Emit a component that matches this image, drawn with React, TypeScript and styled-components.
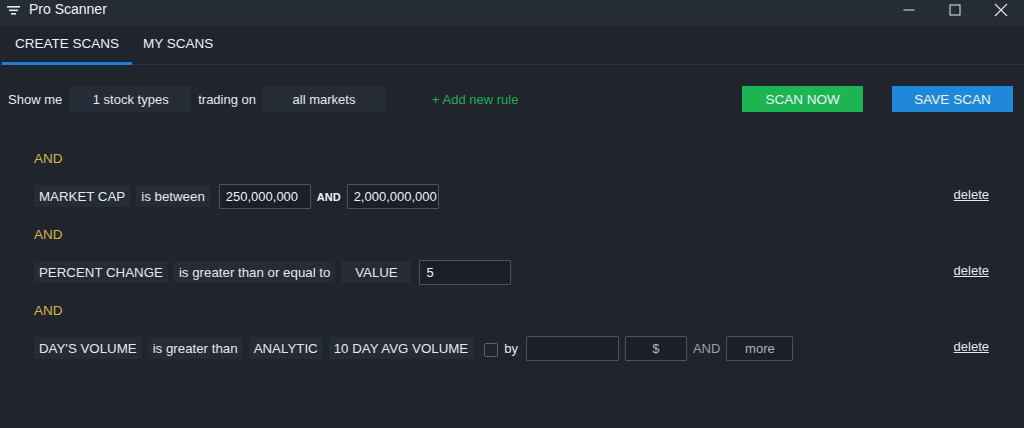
import * as React from 'react'
import styled, { createGlobalStyle } from 'styled-components'

// ______________________________________________________
//
// @ Global

const GlobalStyle = createGlobalStyle`
  html, body {
    margin: 0;
    padding: 0;
    background: #1f242d;
  }
  body {
    font-family: 'Liberation Sans', Arial, sans-serif;
    color: #e6e8ec;
  }
`

// ______________________________________________________
//
// @ Frame

const Window = styled.div`
  width: 1024px;
  height: 428px;
  background: #1f242d;
  display: flex;
  flex-direction: column;
  overflow: hidden;
`

const TitleBar = styled.div`
  height: 25px;
  background: #262c36;
  display: flex;
  align-items: center;
  padding-left: 7px;
`

const Title = styled.span`
  font-size: 14px;
  color: #eef0f3;
  margin-left: 9px;
  margin-top: -7px;
`

const WinControls = styled.div`
  margin-left: auto;
  display: flex;
  align-items: center;
  height: 100%;
`

const WinBtn = styled.div`
  width: 46px;
  height: 100%;
  display: flex;
  align-items: center;
  justify-content: center;
  margin-top: -6px;
`

const Tabs = styled.div`
  display: flex;
  height: 39px;
  border-bottom: 1px solid #2c323c;
  padding-left: 2px;
`

const Tab = styled.div<{ $active?: boolean }>`
  display: flex;
  align-items: center;
  padding: 0 ${p => (p.$active ? '13px' : '11px')};
  font-size: 13.5px;
  color: #eef0f3;
  border-bottom: 3px solid ${p => (p.$active ? '#1f7fd8' : 'transparent')};
  margin-bottom: -1px;
  min-width: ${p => (p.$active ? '102px' : 'auto')};
`

// ______________________________________________________
//
// @ Toolbar

const Toolbar = styled.div`
  display: flex;
  align-items: center;
  height: 26px;
  margin-top: 21px;
  padding: 0 11px 0 8px;
`

const Label = styled.span<{ $ml?: number; $mr?: number }>`
  font-size: 13px;
  color: #e6e8ec;
  margin-left: ${p => p.$ml ?? 0}px;
  margin-right: ${p => p.$mr ?? 0}px;
  white-space: nowrap;
`

const Select = styled.div<{ $w: number }>`
  width: ${p => p.$w}px;
  height: 26px;
  background: #262c36;
  display: flex;
  align-items: center;
  justify-content: center;
  font-size: 13px;
  color: #e6e8ec;
`

const AddRule = styled.span`
  color: #1fae56;
  font-size: 13px;
  margin-left: 47px;
  white-space: nowrap;
`

const Actions = styled.div`
  margin-left: auto;
  display: flex;
  gap: 29px;
`

const ActionBtn = styled.div<{ $bg: string }>`
  width: 121px;
  height: 26px;
  background: ${p => p.$bg};
  display: flex;
  align-items: center;
  justify-content: center;
  color: #eef4f8;
  font-size: 13.5px;
`

// ______________________________________________________
//
// @ Rules

const Rules = styled.div`
  display: flex;
  flex-direction: column;
  padding: 0 35px 0 34px;
  margin-top: 39px;
`

const Join = styled.div`
  color: #d2b544;
  font-size: 13.5px;
  height: 16px;
  line-height: 16px;
`

const Rule = styled.div<{ $mb: number }>`
  display: flex;
  align-items: center;
  height: 26px;
  margin: 16px 0 ${p => p.$mb}px;
  gap: 6px;
`

const Chip = styled.div<{ $w?: number }>`
  height: 22px;
  padding: 0 5px;
  min-width: ${p => (p.$w ? `${p.$w}px` : 'auto')};
  box-sizing: border-box;
  background: #262c36;
  display: flex;
  align-items: center;
  justify-content: center;
  font-size: 13.3px;
  color: #e6e8ec;
  white-space: nowrap;
`

const Input = styled.div<{ $w: number; $center?: boolean; $dim?: boolean; $ml?: number }>`
  width: ${p => p.$w}px;
  height: 25px;
  box-sizing: border-box;
  border: 1px solid #4b5261;
  border-radius: 1px;
  background: #1b1f27;
  display: flex;
  align-items: center;
  justify-content: ${p => (p.$center ? 'center' : 'flex-start')};
  padding: 0 6px;
  font-size: 13px;
  color: ${p => (p.$dim ? '#aeb3bb' : '#eef0f3')};
  overflow: hidden;
  white-space: nowrap;
  margin-left: ${p => p.$ml ?? 0}px;
`

const BoldAnd = styled.span`
  font-size: 11px;
  font-weight: bold;
  color: #f0f2f5;
  margin: 2px 0 0;
`

const PlainAnd = styled.span`
  font-size: 13px;
  color: #9aa0aa;
`

const Checkbox = styled.div`
  width: 12px;
  height: 12px;
  border: 1px solid #5a6170;
  border-radius: 2px;
  margin: 4px 0 0 5px;
`

const Delete = styled.span`
  margin-left: auto;
  font-size: 13px;
  color: #e6e8ec;
  text-decoration: underline;
  margin-top: -4px;
`

// ______________________________________________________
//
// @ View

const App: React.FC = () => (
  <Window>
    <GlobalStyle />
    <TitleBar>
      <svg width="13" height="12" viewBox="0 0 13 12" style={{ marginTop: -5 }}>
        <rect x="0" y="2" width="13" height="1.6" fill="#e6e8ec" />
        <rect x="2" y="5.5" width="9" height="1.6" fill="#e6e8ec" />
        <rect x="4" y="9" width="5" height="1.6" fill="#e6e8ec" />
      </svg>
      <Title>Pro Scanner</Title>
      <WinControls>
        <WinBtn>
          <svg width="12" height="12" viewBox="0 0 12 12">
            <rect x="0.5" y="5.5" width="11" height="1" fill="#e6e8ec" />
          </svg>
        </WinBtn>
        <WinBtn>
          <svg width="12" height="12" viewBox="0 0 12 12">
            <rect x="1" y="1" width="10" height="10" fill="none" stroke="#e6e8ec" strokeWidth="1" />
          </svg>
        </WinBtn>
        <WinBtn>
          <svg width="14" height="14" viewBox="0 0 14 14">
            <path d="M1 1 L13 13 M13 1 L1 13" stroke="#e6e8ec" strokeWidth="1.1" />
          </svg>
        </WinBtn>
      </WinControls>
    </TitleBar>

    <Tabs>
      <Tab $active>CREATE SCANS</Tab>
      <Tab>MY SCANS</Tab>
    </Tabs>

    <Toolbar>
      <Label $mr={8}>Show me</Label>
      <Select $w={121}>1 stock types</Select>
      <Label $ml={7} $mr={7}>trading on</Label>
      <Select $w={122}>all markets</Select>
      <AddRule>+ Add new rule</AddRule>
      <Actions>
        <ActionBtn $bg="#1cb552">SCAN NOW</ActionBtn>
        <ActionBtn $bg="#1f88d8">SAVE SCAN</ActionBtn>
      </Actions>
    </Toolbar>

    <Rules>
      <Join>AND</Join>
      <Rule $mb={18}>
        <Chip $w={95}>MARKET CAP</Chip>
        <Chip>is between</Chip>
        <Input $w={92} $ml={3}>250,000,000</Input>
        <BoldAnd>AND</BoldAnd>
        <Input $w={92}>2,000,000,000</Input>
        <Delete>delete</Delete>
      </Rule>

      <Join>AND</Join>
      <Rule $mb={18}>
        <Chip>PERCENT CHANGE</Chip>
        <Chip>is greater than or equal to</Chip>
        <Chip $w={70}>VALUE</Chip>
        <Input $w={92} $ml={2}>5</Input>
        <Delete>delete</Delete>
      </Rule>

      <Join>AND</Join>
      <Rule $mb={0}>
        <Chip>DAY'S VOLUME</Chip>
        <Chip>is greater than</Chip>
        <Chip>ANALYTIC</Chip>
        <Chip>10 DAY AVG VOLUME</Chip>
        <Checkbox />
        <Label>by</Label>
        <Input $w={93} $ml={2} />
        <Input $w={62} $center $dim>$</Input>
        <PlainAnd>AND</PlainAnd>
        <Input $w={67} $center $dim>more</Input>
        <Delete>delete</Delete>
      </Rule>
    </Rules>
  </Window>
)

export default App
